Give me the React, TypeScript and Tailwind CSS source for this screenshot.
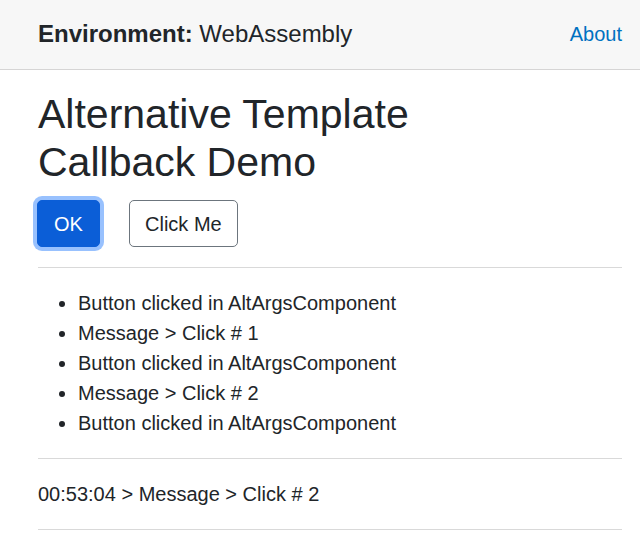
import React from "react";

export default function App() {
  const items = [
    "Button clicked in AltArgsComponent",
    "Message > Click # 1",
    "Button clicked in AltArgsComponent",
    "Message > Click # 2",
    "Button clicked in AltArgsComponent",
  ];
  return (
    <div
      className="min-h-[538px] bg-white text-[#212529]"
      style={{ fontFamily: '"Liberation Sans", Arial, sans-serif' }}
    >
      <header className="flex h-[70px] items-center justify-between border-b border-[#d6d5d5] bg-[#f7f7f7] pl-[38px] pr-[18px]">
        <div className="mt-[-2px] text-[24px] leading-[36px]">
          <span className="font-bold">Environment:</span> WebAssembly
        </div>
        <a className="mt-[-2px] text-[20px] leading-[30px] text-[#0071c1]">About</a>
      </header>
      <main className="pl-[38px] pr-[18px] pt-[20px]">
        <h1 className="text-[41px] font-normal leading-[48px]">
          Alternative Template
          <br />
          Callback Demo
        </h1>
        <div className="mt-[14px] flex items-center">
          <button className="ml-[-1px] h-[47px] w-[63px] rounded-[5px] border border-[#0b5ed7] bg-[#0b5ed7] text-[20px] leading-[30px] text-white shadow-[0_0_0_4px_rgba(49,132,253,0.5)]">
            OK
          </button>
          <button className="ml-[29px] h-[47px] rounded-[5px] border border-[#6c757d] bg-white px-[15px] text-[20px] leading-[30px] text-[#212529]">
            Click Me
          </button>
        </div>
        <hr className="my-[20px] border-t border-[#d9d9d9]" />
        <ul className="mb-[20px] list-disc pl-[40px] text-[20px] leading-[30px]">
          {items.map((t, i) => (
            <li key={i}>{t}</li>
          ))}
        </ul>
        <hr className="my-[20px] border-t border-[#d9d9d9]" />
        <p className="mb-[20px] text-[20px] leading-[30px]">00:53:04 &gt; Message &gt; Click # 2</p>
        <hr className="border-t border-[#d9d9d9]" />
      </main>
    </div>
  );
}
